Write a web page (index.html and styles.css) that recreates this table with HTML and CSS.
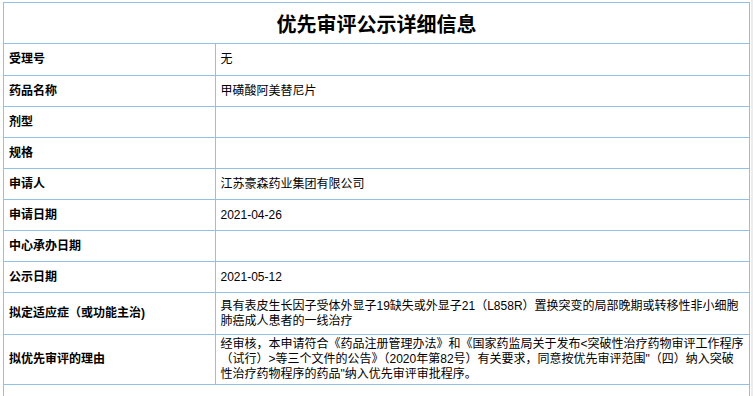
FILE: index.html
```html
<!DOCTYPE html>
<html lang="zh">
<head>
<meta charset="utf-8">
<title>优先审评公示详细信息</title>
<link rel="stylesheet" href="styles.css">
</head>
<body>
<div class="page">
  <div class="sheet">
    <div class="title">优先审评公示详细信息</div>
    <table class="detail">
      <tr class="first"><th>受理号</th><td>无</td></tr>
      <tr><th>药品名称</th><td>甲磺酸阿美替尼片</td></tr>
      <tr><th>剂型</th><td></td></tr>
      <tr><th>规格</th><td></td></tr>
      <tr><th>申请人</th><td>江苏豪森药业集团有限公司</td></tr>
      <tr><th>申请日期</th><td>2021-04-26</td></tr>
      <tr><th>中心承办日期</th><td></td></tr>
      <tr><th>公示日期</th><td>2021-05-12</td></tr>
      <tr class="tall2"><th>拟定适应症（或功能主治)</th><td>具有表皮生长因子受体外显子19缺失或外显子21（L858R）置换突变的局部晚期或转移性非小细胞肺癌成人患者的一线治疗</td></tr>
      <tr class="tall3"><th>拟优先审评的理由</th><td>经审核，本申请符合《药品注册管理办法》和《国家药监局关于发布&lt;突破性治疗药物审评工作程序<br>（试行）&gt;等三个文件的公告》（2020年第82号）有关要求，同意按优先审评范围"（四）纳入突破性治疗药物程序的药品"纳入优先审评审批程序。</td></tr>
    </table>
  </div>
  <div class="gutter"></div>
</div>
</body>
</html>
```
FILE: styles.css
```css
html, body {
  margin: 0;
  padding: 0;
  background: #ffffff;
}
body {
  font-family: "Liberation Sans", "Noto Sans CJK SC", sans-serif;
  font-size: 12px;
  color: #000;
}
.page {
  display: flex;
  height: 396px;
  overflow: hidden;
}
.sheet {
  margin: 2px 0 0 3px;
  width: 747px;
  border-left: 1px solid #92c0e6;
  border-right: 1px solid #92c0e6;
  box-sizing: border-box;
}
.gutter {
  margin-left: 1px;
  width: 2px;
  background: #ececec;
}
.title {
  height: 40px;
  border-top: 1px solid #92c0e6;
  display: flex;
  align-items: center;
  justify-content: center;
  font-size: 20px;
  font-weight: bold;
  font-family: "Noto Sans CJK SC", sans-serif;
}
.detail {
  width: 100%;
  border-collapse: collapse;
  table-layout: fixed;
}
.detail th, .detail td {
  border-top: 1px solid #92c0e6;
  border-bottom: 1px solid #92c0e6;
  height: 31px;
  padding: 0 5px;
  line-height: 15px;
  vertical-align: middle;
  text-align: left;
  box-sizing: border-box;
}
.detail th {
  width: 211px;
  font-weight: bold;
  border-right: 1px solid #92c0e6;
}
.detail .first th, .detail .first td {
  height: 32px;
}
.detail .tall2 th, .detail .tall2 td {
  height: 42px;
}
.detail .tall3 th, .detail .tall3 td {
  height: 50px;
}
```
